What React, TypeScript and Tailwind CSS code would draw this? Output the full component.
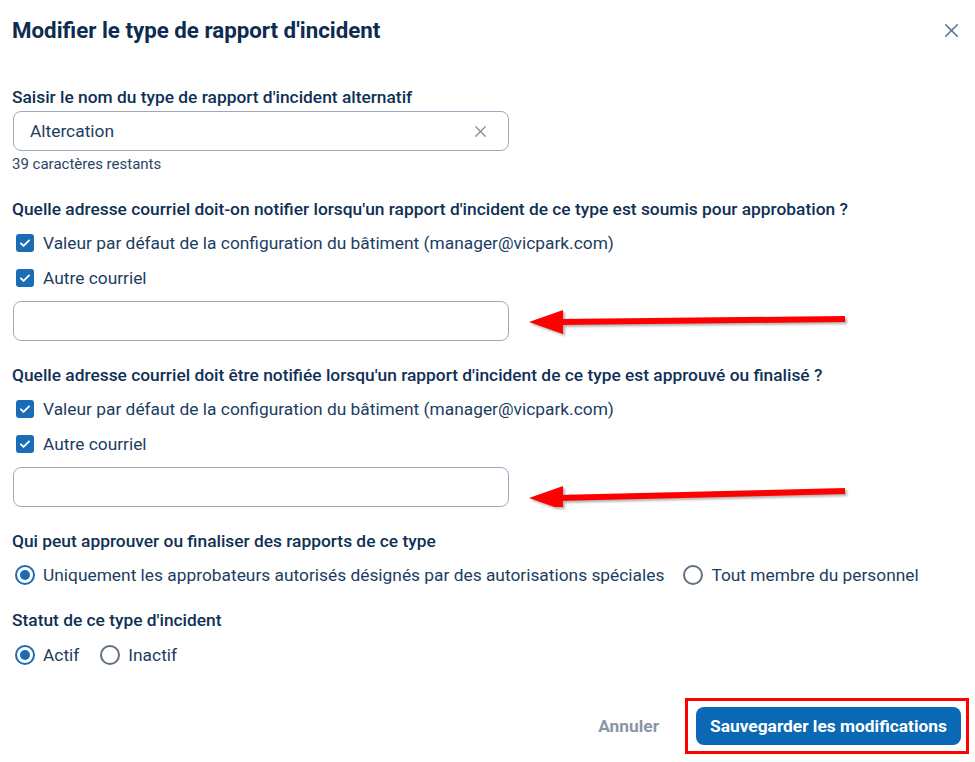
import { X } from "lucide-react";

function Check({ label }: { label: string }) {
  return (
    <label className="flex items-center h-6 gap-[9px] pl-[4px]">
      <span className="w-[18px] h-[18px] rounded-[3px] bg-[#1a6cb5] flex items-center justify-center">
        <svg width="14" height="14" viewBox="0 0 24 24" fill="none" stroke="white" strokeWidth="3.2" strokeLinecap="round" strokeLinejoin="round">
          <path d="M5 12.5l4.5 4.5L19 7.5" />
        </svg>
      </span>
      <span>{label}</span>
    </label>
  );
}

function Radio({ label, checked }: { label: string; checked?: boolean }) {
  return (
    <label className="flex items-center h-6 gap-[8px]">
      <span
        className={
          checked
            ? "w-5 h-5 rounded-full border-2 border-[#1a6cb5] flex items-center justify-center"
            : "w-5 h-5 rounded-full border-2 border-[#5f7084]"
        }
      >
        {checked && <span className="w-[10px] h-[10px] rounded-full bg-[#1a6cb5]" />}
      </span>
      <span>{label}</span>
    </label>
  );
}

function Arrow({ tipY, endY }: { tipY: number; endY: number }) {
  return (
    <svg width="330" height="40" viewBox="0 0 330 40" className="ml-[18px] drop-shadow-[2px_2px_1px_rgba(0,0,0,0.3)]">
      <line x1="30" y1={tipY} x2="318" y2={endY} stroke="#ff0000" strokeWidth="6" />
      <polygon points={`2,${tipY} 36,${tipY - 12} 36,${tipY + 12}`} fill="#ff0000" />
    </svg>
  );
}

export default function App() {
  return (
    <div className="w-[975px] h-[762px] bg-white text-[17.35px] text-[#1c3d62] font-['Roboto',sans-serif] pl-[12px] pr-[6px] overflow-hidden">
      {/* Header */}
      <div className="flex items-center justify-between pt-[15px] pr-[6px]">
        <h1 className="text-[22.3px] leading-[30px] font-bold text-[#0c2c50]">Modifier le type de rapport d'incident</h1>
        <button className="text-[#5c7490]">
          <X size={23} strokeWidth={1.7} />
        </button>
      </div>

      <div className="mt-[40px] leading-6 font-medium text-[#0f3056]">Saisir le nom du type de rapport d'incident alternatif</div>
      <div className="mt-[2px] w-[496px] h-10 ml-[1px] border border-[#9aabbf] rounded-[8px] flex items-center justify-between pl-[16px] pr-[18px]">
        <span>Altercation</span>
        <X size={19} strokeWidth={1.6} className="text-[#7d8fa3]" />
      </div>
      <div className="mt-[4px] text-[15px] leading-[18px] text-[#2a4566]">39 caractères restants</div>

      <div className="mt-[24px] leading-6 font-medium text-[#0f3056]">
        Quelle adresse courriel doit-on notifier lorsqu'un rapport d'incident de ce type est soumis pour approbation ?
      </div>
      <div className="mt-[10px]">
        <Check label="Valeur par défaut de la configuration du bâtiment (manager@vicpark.com)" />
      </div>
      <div className="mt-[11px]">
        <Check label="Autre courriel" />
      </div>
      <div className="mt-[11px] flex items-center">
        <div className="w-[496px] h-10 ml-[1px] border border-[#9aabbf] rounded-[8px]" />
        <Arrow tipY={21} endY={18} />
      </div>

      <div className="mt-[22px] leading-6 font-medium text-[#0f3056]">
        Quelle adresse courriel doit être notifiée lorsqu'un rapport d'incident de ce type est approuvé ou finalisé ?
      </div>
      <div className="mt-[10px]">
        <Check label="Valeur par défaut de la configuration du bâtiment (manager@vicpark.com)" />
      </div>
      <div className="mt-[11px]">
        <Check label="Autre courriel" />
      </div>
      <div className="mt-[11px] flex items-center">
        <div className="w-[496px] h-10 ml-[1px] border border-[#9aabbf] rounded-[8px]" />
        <Arrow tipY={31} endY={24} />
      </div>

      <div className="mt-[22px] leading-6 font-medium text-[#0f3056]">Qui peut approuver ou finaliser des rapports de ce type</div>
      <div className="mt-[10px] flex items-center gap-[19px] pl-[3px]">
        <Radio checked label="Uniquement les approbateurs autorisés désignés par des autorisations spéciales" />
        <Radio label="Tout membre du personnel" />
      </div>

      <div className="mt-[21px] leading-6 font-medium text-[#0f3056]">Statut de ce type d'incident</div>
      <div className="mt-[11px] flex items-center gap-[21px] pl-[3px]">
        <Radio checked label="Actif" />
        <Radio label="Inactif" />
      </div>

      {/* Footer */}
      <div className="mt-[31px] flex items-center justify-end gap-[26px]">
        <button className="font-bold text-[#8b96a3]">Annuler</button>
        <div className="border-[3px] border-[#ff0000] pl-[8px] pr-[5px] py-[6px]">
          <button className="h-[38px] w-[265px] rounded-[8px] bg-[#0a68b4] text-white font-bold">
            Sauvegarder les modifications
          </button>
        </div>
      </div>
    </div>
  );
}
